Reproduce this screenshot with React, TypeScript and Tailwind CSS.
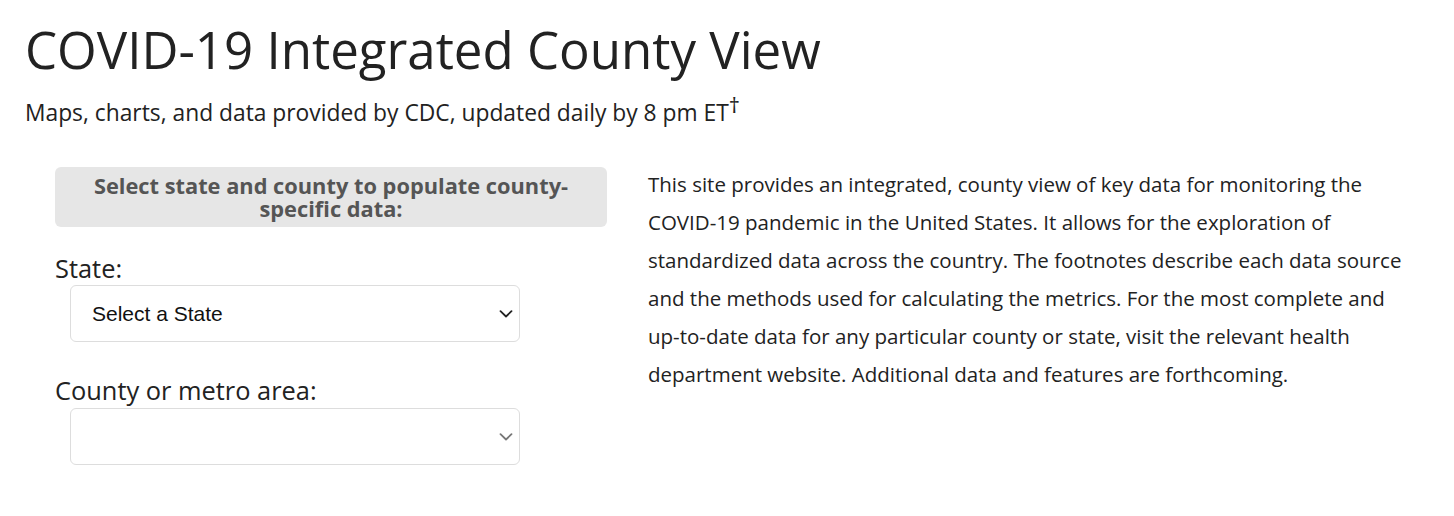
import React from "react";

function Chevron({ color }: { color: string }) {
  return (
    <svg width="14" height="8" viewBox="0 0 14 8" className="absolute right-[6px] top-1/2 -translate-y-1/2" fill="none" stroke={color} strokeWidth="1.8" strokeLinecap="round" strokeLinejoin="round">
      <path d="M1.5 1.2 L7 6.5 L12.5 1.2" />
    </svg>
  );
}

export default function App() {
  return (
    <div className="bg-white text-[#222] min-h-[516px] px-[25px] pt-[18px]" style={{ fontFamily: '"Open Sans", sans-serif' }}>
      <h1 className="text-[51px] leading-[62px] font-normal text-[#222]">COVID-19 Integrated County View</h1>
      <p className="text-[22.8px] leading-[30px] mt-[18px] text-[#222]">
        Maps, charts, and data provided by CDC, updated daily by 8 pm ET<sup className="text-[22px] relative -top-[8px]">†</sup>
      </p>
      <div className="flex mt-[39px]">
        <div className="w-[552px] ml-[30px] shrink-0">
          <div className="bg-[#e6e6e6] rounded-[6px] h-[60px] flex items-center justify-center text-center px-[28px]">
            <p className="font-bold text-[21.8px] leading-[23px] text-[#555]">Select state and county to populate county-specific data:</p>
          </div>
          <label className="block text-[25.4px] leading-[30px] mt-[26px] text-[#222]">State:</label>
          <div className="relative ml-[15px] w-[450px] h-[57px] mt-[2px] border border-[#ddd] rounded-[6px] flex items-center pl-[21px]">
            <span className="text-[21px] text-[#111]" style={{ fontFamily: '"Liberation Sans", Arial, sans-serif' }}>Select a State</span>
            <Chevron color="#222" />
          </div>
          <label className="block text-[25.4px] leading-[30px] mt-[33px] text-[#222]">County or metro area:</label>
          <div className="relative ml-[15px] w-[450px] h-[57px] border border-[#ddd] rounded-[6px] mt-[3px]">
            <Chevron color="#777" />
          </div>
        </div>
        <div className="ml-[41px] -mt-[2px] text-[20.5px] leading-[38px] text-[#222] w-[765px]">
          This site provides an integrated, county view of key data for monitoring the COVID-19 pandemic in the United States. It allows for the exploration of standardized data across the country. The footnotes describe each data source and the methods used for calculating the metrics. For the most complete and up-to-date data for any particular county or state, visit the relevant health department website. Additional data and features are forthcoming.
        </div>
      </div>
    </div>
  );
}
